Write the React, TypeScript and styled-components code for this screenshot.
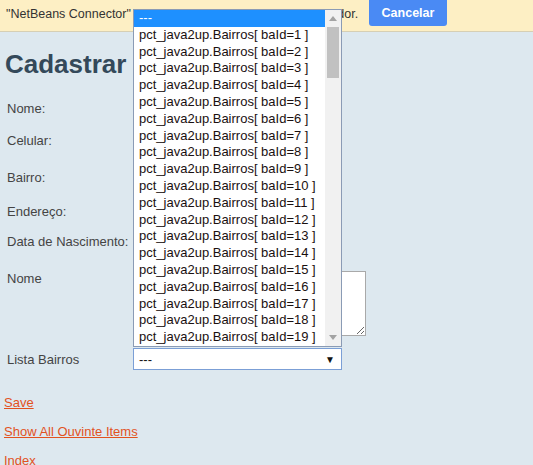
import React from "react";
import styled, { createGlobalStyle } from "styled-components";

const GlobalStyle = createGlobalStyle`
  html, body {
    margin: 0;
    padding: 0;
    background: #dde8ef;
    font-family: "Liberation Sans", Arial, sans-serif;
  }
`;

const bairros = Array.from({ length: 19 }, (_, i) => `pct_java2up.Bairros[ baId=${i + 1} ]`);

const Page = styled.div`
  position: relative;
  width: 533px;
  height: 465px;
  overflow: hidden;
  background: #dde8ef;
`;

const InfoBar = styled.div`
  display: flex;
  align-items: flex-start;
  height: 31px;
  background: #fdefc4;
  border-bottom: 1px solid #d6cfb4;
  font-size: 12.5px;
  color: #333;
`;

const InfoText = styled.div`
  flex: 1;
  padding: 7px 0 0 6px;
  white-space: nowrap;
  overflow: hidden;
`;

const CancelButton = styled.button`
  width: 78px;
  height: 26px;
  margin-right: 86px;
  border: none;
  border-radius: 0 0 3px 3px;
  background: #4a8af4;
  color: #fff;
  font-family: "Liberation Sans", Arial, sans-serif;
  font-weight: bold;
  font-size: 12.5px;
  padding: 0;
`;

const Content = styled.div`
  padding: 0 4px;
`;

const Title = styled.h1`
  margin: 17px 0 13px 1px;
  font-size: 26px;
  line-height: 30px;
  font-weight: bold;
  color: #34495a;
`;

const Form = styled.div`
  display: grid;
  grid-template-columns: 129px 1fr;
`;

const Label = styled.div<{ $h: number; $top?: boolean }>`
  height: ${(p) => p.$h}px;
  display: flex;
  align-items: ${(p) => (p.$top ? "flex-start" : "center")};
  padding: ${(p) => (p.$top ? "13px 0 0 3px" : "0 0 0 3px")};
  box-sizing: border-box;
  font-size: 13px;
  line-height: 15px;
  color: #444;
`;

const Field = styled.div<{ $h: number; $top?: boolean }>`
  height: ${(p) => p.$h}px;
  display: flex;
  align-items: ${(p) => (p.$top ? "flex-start" : "center")};
  padding-top: ${(p) => (p.$top ? 13 : 0)}px;
  box-sizing: border-box;
`;

const TextInput = styled.input`
  width: 200px;
  height: 20px;
  border: 1px solid #a9a9a9;
`;

const TextArea = styled.textarea`
  width: 233px;
  height: 65px;
  box-sizing: border-box;
  border: 1px solid #a9a9a9;
  background: #fff;
  margin: 0;
`;

const SelectBox = styled.div`
  width: 209px;
  height: 22px;
  box-sizing: border-box;
  border: 1px solid #7b9fd6;
  background: #fff;
  display: flex;
  align-items: center;
  justify-content: space-between;
  padding: 0 6px 0 5px;
  font-size: 13px;
  color: #111;
`;

const Arrow = styled.span`
  font-size: 10px;
  color: #111;
`;

const Links = styled.div`
  margin-top: 19px;
  display: flex;
  flex-direction: column;
  gap: 14px;
`;

const Link = styled.a`
  font-size: 13px;
  line-height: 15px;
  color: #e2521e;
  text-decoration: underline;
  width: max-content;
`;

const DropList = styled.div`
  position: absolute;
  left: 133px;
  top: 9px;
  width: 209px;
  height: 338px;
  box-sizing: border-box;
  border: 1px solid #8a9bb5;
  background: #fff;
  display: flex;
  z-index: 10;
`;

const Options = styled.div`
  flex: 1;
  overflow: hidden;
`;

const Option = styled.div<{ $selected?: boolean }>`
  height: 16.8px;
  line-height: 16.8px;
  padding-left: 5px;
  font-size: 13px;
  white-space: nowrap;
  color: ${(p) => (p.$selected ? "#fff" : "#1a1010")};
  background: ${(p) => (p.$selected ? "#1e90ff" : "transparent")};
`;

const ScrollBar = styled.div`
  width: 16px;
  background: #f1f1f1;
  display: flex;
  flex-direction: column;
  align-items: center;
`;

const ScrollArrow = styled.div`
  height: 17px;
  display: flex;
  align-items: center;
  justify-content: center;
`;

const Thumb = styled.div`
  width: 12px;
  height: 51px;
  background: #c1c1c1;
`;

const Spacer = styled.div`
  flex: 1;
`;

const rows = [
  { label: "Nome:", h: 32 },
  { label: "Celular:", h: 32 },
  { label: "Bairro:", h: 42 },
  { label: "Endereço:", h: 26 },
  { label: "Data de Nascimento:", h: 34 },
];

export default function App() {
  return (
    <Page>
      <GlobalStyle />
      <InfoBar>
        <InfoText>"NetBeans Connector" está depurando esta guia do navegador.</InfoText>
        <CancelButton>Cancelar</CancelButton>
      </InfoBar>
      <Content>
        <Title>Cadastrar</Title>
        <Form>
          {rows.map((r) => (
            <React.Fragment key={r.label}>
              <Label $h={r.h}>{r.label}</Label>
              <Field $h={r.h}>
                <TextInput />
              </Field>
            </React.Fragment>
          ))}
          <Label $h={84} $top>
            Nome
          </Label>
          <Field $h={84} $top>
            <TextArea />
          </Field>
          <Label $h={34}>Lista Bairros</Label>
          <Field $h={34}>
            <SelectBox>
              <span>---</span>
              <Arrow>▼</Arrow>
            </SelectBox>
          </Field>
        </Form>
        <Links>
          <Link>Save</Link>
          <Link>Show All Ouvinte Items</Link>
          <Link>Index</Link>
        </Links>
      </Content>
      <DropList>
        <Options>
          <Option $selected>---</Option>
          {bairros.map((b) => (
            <Option key={b}>{b}</Option>
          ))}
        </Options>
        <ScrollBar>
          <ScrollArrow>
            <svg width="8" height="5" viewBox="0 0 8 5">
              <path d="M0 5 L4 0 L8 5 Z" fill="#a3a3a3" />
            </svg>
          </ScrollArrow>
          <Thumb />
          <Spacer />
          <ScrollArrow>
            <svg width="8" height="5" viewBox="0 0 8 5">
              <path d="M0 0 L8 0 L4 5 Z" fill="#a3a3a3" />
            </svg>
          </ScrollArrow>
        </ScrollBar>
      </DropList>
    </Page>
  );
}
